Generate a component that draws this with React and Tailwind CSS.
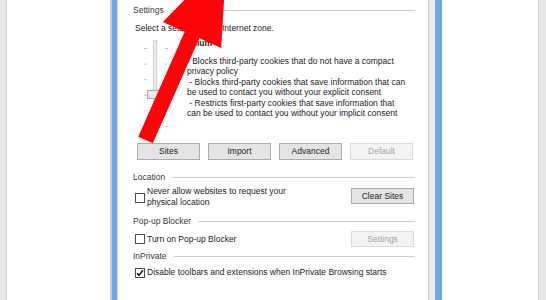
import React from 'react'

function GroupHeader({ label, className = '' }) {
  return (
    <div className={`flex items-center h-[12px] pl-[15px] pr-[13px] ${className}`}>
      <span className="text-[#3a3a3a]">{label}</span>
      <div className="flex-1 h-px bg-[#cdcdcd] ml-[7px] mt-[1px]" />
    </div>
  )
}

function Btn({ children, disabled = false }) {
  return (
    <div
      className={`w-[63px] h-full flex items-center justify-center border ${
        disabled
          ? 'border-[#dadada] bg-[#f3f3f3] text-[#a6a6a6]'
          : 'border-[#adadad] bg-[#e4e4e4] text-[#1c1c1c]'
      }`}
    >
      {children}
    </div>
  )
}

function Check({ checked = false }) {
  return (
    <div className="w-[10px] h-[10px] shrink-0 border border-[#4d4d4d] bg-white flex items-center justify-center">
      {checked && (
        <svg width="8" height="8" viewBox="0 0 8 8">
          <path d="M1 4.2 L3 6.3 L7 1.2" stroke="#1a1a1a" strokeWidth="1.5" fill="none" />
        </svg>
      )}
    </div>
  )
}

function PrivacySlider() {
  const ticks = [14, 29.6, 45.2, 60.8, 76.4, 92]
  return (
    <svg width="40" height="109" viewBox="0 0 40 109" className="shrink-0 ml-[22px]">
      <rect x="13.5" y="6.5" width="3" height="90" fill="#ececec" stroke="#d2d2d2" />
      {ticks.map((y) => (
        <g key={y}>
          <rect x="4" y={y} width="3" height="1" fill="#c4c4c4" />
          <rect x="25" y={y} width="3" height="1" fill="#c4c4c4" />
        </g>
      ))}
      <rect x="7.5" y="56.5" width="18" height="8" fill="#e9e9e9" stroke="#a9a9a9" />
    </svg>
  )
}

export default function App() {
  return (
    <div className="relative w-[546px] h-[300px] overflow-hidden flex bg-white font-['Liberation_Sans',Arial,sans-serif] text-[8.5px] leading-[11px] text-[#1c1c1c]">
      {/* left backdrop */}
      <div className="w-[6px] bg-[#e7e7e7]" />
      <div className="w-px bg-[#d2d2d2]" />
      <div className="w-[103px] bg-white" />
      <div className="w-[2px] bg-[#cbcbcb]" />
      <div className="w-[5px] bg-[#6fa8ea]" />
      <div className="w-px bg-[#dadada]" />

      {/* dialog page */}
      <div className="w-[310px] bg-white flex flex-col">
        <GroupHeader label="Settings" className="mt-[4px]" />
        <div className="pl-[17px] mt-[6px] h-[12px] flex items-center">
          Select a setting for the Internet zone.
        </div>

        <div className="flex h-[109px]">
          <PrivacySlider />
          <div className="flex flex-col pt-[4px]">
            <div className="font-bold h-[11px] flex items-center">Medium</div>
            <div className="mt-[7px] pl-[7px] leading-[10.4px] whitespace-pre">
              <div>- Blocks third-party cookies that do not have a compact</div>
              <div>privacy policy</div>
              <div> - Blocks third-party cookies that save information that can</div>
              <div>be used to contact you without your explicit consent</div>
              <div> - Restricts first-party cookies that save information that</div>
              <div>can be used to contact you without your implicit consent</div>
            </div>
          </div>
        </div>

        <div className="flex gap-[8px] h-[17px] pl-[19px]">
          <Btn>Sites</Btn>
          <Btn>Import</Btn>
          <Btn>Advanced</Btn>
          <Btn disabled>Default</Btn>
        </div>

        <GroupHeader label="Location" className="mt-[11px]" />
        <div className="flex h-[22px] mt-[3px] pl-[17px] pr-[14px]">
          <div className="pt-[7px]">
            <Check />
          </div>
          <div className="ml-[2px] flex-1">
            <div>Never allow websites to request your</div>
            <div>physical location</div>
          </div>
          <div className="h-[16px] mt-[2px]">
            <Btn>Clear Sites</Btn>
          </div>
        </div>

        <GroupHeader label="Pop-up Blocker" className="mt-[7px]" />
        <div className="flex items-center h-[16px] mt-[4px] pl-[17px] pr-[14px]">
          <Check />
          <div className="ml-[2px] flex-1">Turn on Pop-up Blocker</div>
          <div className="h-[16px]">
            <Btn disabled>Settings</Btn>
          </div>
        </div>

        <GroupHeader label="InPrivate" className="mt-[3px]" />
        <div className="flex items-center h-[11px] mt-[5px] pl-[17px]">
          <Check checked />
          <div className="ml-[2px] whitespace-nowrap">Disable toolbars and extensions when InPrivate Browsing starts</div>
        </div>
      </div>

      {/* right frame */}
      <div className="w-px bg-[#c6c6c6]" />
      <div className="w-[6px] bg-[#ebebeb]" />
      <div className="w-[7px] bg-[#6fa8ea]" />
      <div className="w-[96px] bg-white" />
      <div className="w-px bg-[#d2d2d2]" />
      <div className="w-[7px] bg-[#e7e7e7]" />

      {/* red arrow overlay */}
      <svg
        className="absolute inset-0 pointer-events-none"
        width="546"
        height="300"
        viewBox="0 0 546 300"
      >
        <polygon
          points="138.2,136.7 184.7,31.7 162.8,22 226.6,-42.7 221.2,48 199.3,38.3 152.8,143.3"
          fill="#fb0508"
        />
      </svg>
    </div>
  )
}
